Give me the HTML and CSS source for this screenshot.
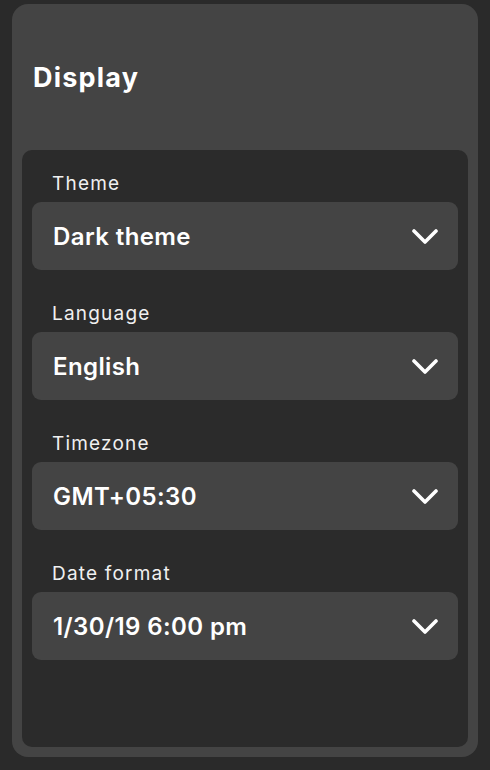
FILE: index.html
```html
<!DOCTYPE html>
<html lang="en">
<head>
<meta charset="utf-8">
<title>Display</title>
<link rel="stylesheet" href="styles.css">
</head>
<body>
<section class="card">
  <h1 class="card-title">Display</h1>
  <div class="panel">
    <div class="field">
      <div class="field-label">Theme</div>
      <div class="select"><span class="select-value">Dark theme</span><svg class="chevron" viewBox="0 0 26 15" width="26" height="15"><polyline points="2,2 13,13 24,2"/></svg></div>
    </div>
    <div class="field">
      <div class="field-label">Language</div>
      <div class="select"><span class="select-value">English</span><svg class="chevron" viewBox="0 0 26 15" width="26" height="15"><polyline points="2,2 13,13 24,2"/></svg></div>
    </div>
    <div class="field">
      <div class="field-label">Timezone</div>
      <div class="select"><span class="select-value">GMT+05:30</span><svg class="chevron" viewBox="0 0 26 15" width="26" height="15"><polyline points="2,2 13,13 24,2"/></svg></div>
    </div>
    <div class="field">
      <div class="field-label">Date format</div>
      <div class="select"><span class="select-value">1/30/19 6:00 pm</span><svg class="chevron" viewBox="0 0 26 15" width="26" height="15"><polyline points="2,2 13,13 24,2"/></svg></div>
    </div>
  </div>
</section>
</body>
</html>
```

FILE: styles.css
```css
html, body {
  margin: 0;
  padding: 0;
  background: #2a2a2a;
}
body {
  font-family: Inter, "Noto Sans", sans-serif;
  color: #ffffff;
  padding: 4px 12px 0 12px;
}
.card {
  width: 466px;
  height: 753px;
  box-sizing: border-box;
  background: #444444;
  border-radius: 16px;
  padding: 10px;
  display: flex;
  flex-direction: column;
}
.card-title {
  margin: 0;
  height: 136px;
  box-sizing: border-box;
  padding: 47px 0 0 11px;
  font-size: 27px;
  line-height: 34px;
  font-weight: 700;
  letter-spacing: 1.2px;
}
.panel {
  flex: 1;
  background: #2b2b2b;
  border-radius: 10px;
  padding: 22px 10px 0 10px;
  display: flex;
  flex-direction: column;
  gap: 32px;
}
.field {
  display: flex;
  flex-direction: column;
  gap: 6px;
}
.field-label {
  padding-left: 20px;
  font-size: 19px;
  line-height: 24px;
  font-weight: 400;
  letter-spacing: 1.2px;
  color: #f0f0f0;
}
.select {
  height: 68px;
  background: #444444;
  border-radius: 9px;
  display: flex;
  align-items: center;
  justify-content: space-between;
  padding: 0 20px 0 21px;
}
.select-value {
  font-size: 24px;
  font-weight: 600;
  letter-spacing: 0.4px;
}
.chevron {
  fill: none;
  stroke: #ffffff;
  stroke-width: 3.6;
  stroke-linecap: round;
  stroke-linejoin: round;
}
```
